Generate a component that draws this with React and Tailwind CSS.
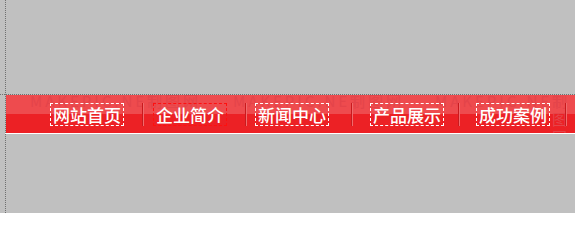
import React from "react";

const items = [
  { label: "网站首页", cls: "ml-[44px] border-white", sep: "ml-[18px]" },
  { label: "企业简介", cls: "ml-[9px] border-[#ff1010]", sep: "ml-[18px]" },
  { label: "新闻中心", cls: "ml-[8px] border-white", sep: "ml-[22px]" },
  { label: "产品展示", cls: "ml-[17px] border-white", sep: "ml-[14px]" },
  { label: "成功案例", cls: "ml-[16px] border-white", sep: "ml-[15px]" },
];

const marks = [
  { t: "MAKEPIC.NET", x: "left-[24px]" },
  { t: "制图网", x: "left-[141px]" },
  { t: "MAKEPIC.NET", x: "left-[227px]" },
  { t: "制图网", x: "left-[344px]" },
  { t: "MAKEPIC.NET", x: "left-[429px]" },
  { t: "制图网", x: "left-[546px]" },
];

export default function App() {
  return (
    <div
      className="relative w-[575px] h-[213px] overflow-hidden bg-[#c0c0c0]"
      style={{ fontFamily: '"Noto Sans CJK SC", "Noto Sans", sans-serif' }}
    >
      <div className="h-[94px]" />
      <div className="border-t border-dotted border-[#707070]" />
      <div className="ml-[6px] relative">
        <div className="relative h-[38px] bg-[linear-gradient(to_bottom,#ee4b4e_0,#ee4b4e_19px,#ec2125_19px,#ec2125_100%)] flex items-center overflow-hidden">
          {marks.map((m, i) => (
            <span
              key={i}
              className={`absolute top-[-3px] ${m.x} text-[15px] leading-[18px] tracking-[3px] text-[#e4444a]`}
            >
              {m.t}
            </span>
          ))}
          {items.map((it, i) => (
            <React.Fragment key={i}>
              <span
                className={`relative ${it.cls} border border-dashed px-[2px] h-[23px] text-white text-[17px] leading-[21px] font-medium whitespace-nowrap`}
              >
                {it.label}
              </span>
              <span className={`relative ${it.sep} flex h-[23px]`}>
                <span className="w-[1px] bg-[#c81a1e]" />
                <span className="w-[1px] bg-[#f06a6c]" />
              </span>
            </React.Fragment>
          ))}
        </div>
        <div className="h-[1px] bg-white -ml-[1px]" />
      </div>
      <div className="absolute left-[5px] top-0 h-full border-l border-dotted border-[#707070]" />
    </div>
  );
}
